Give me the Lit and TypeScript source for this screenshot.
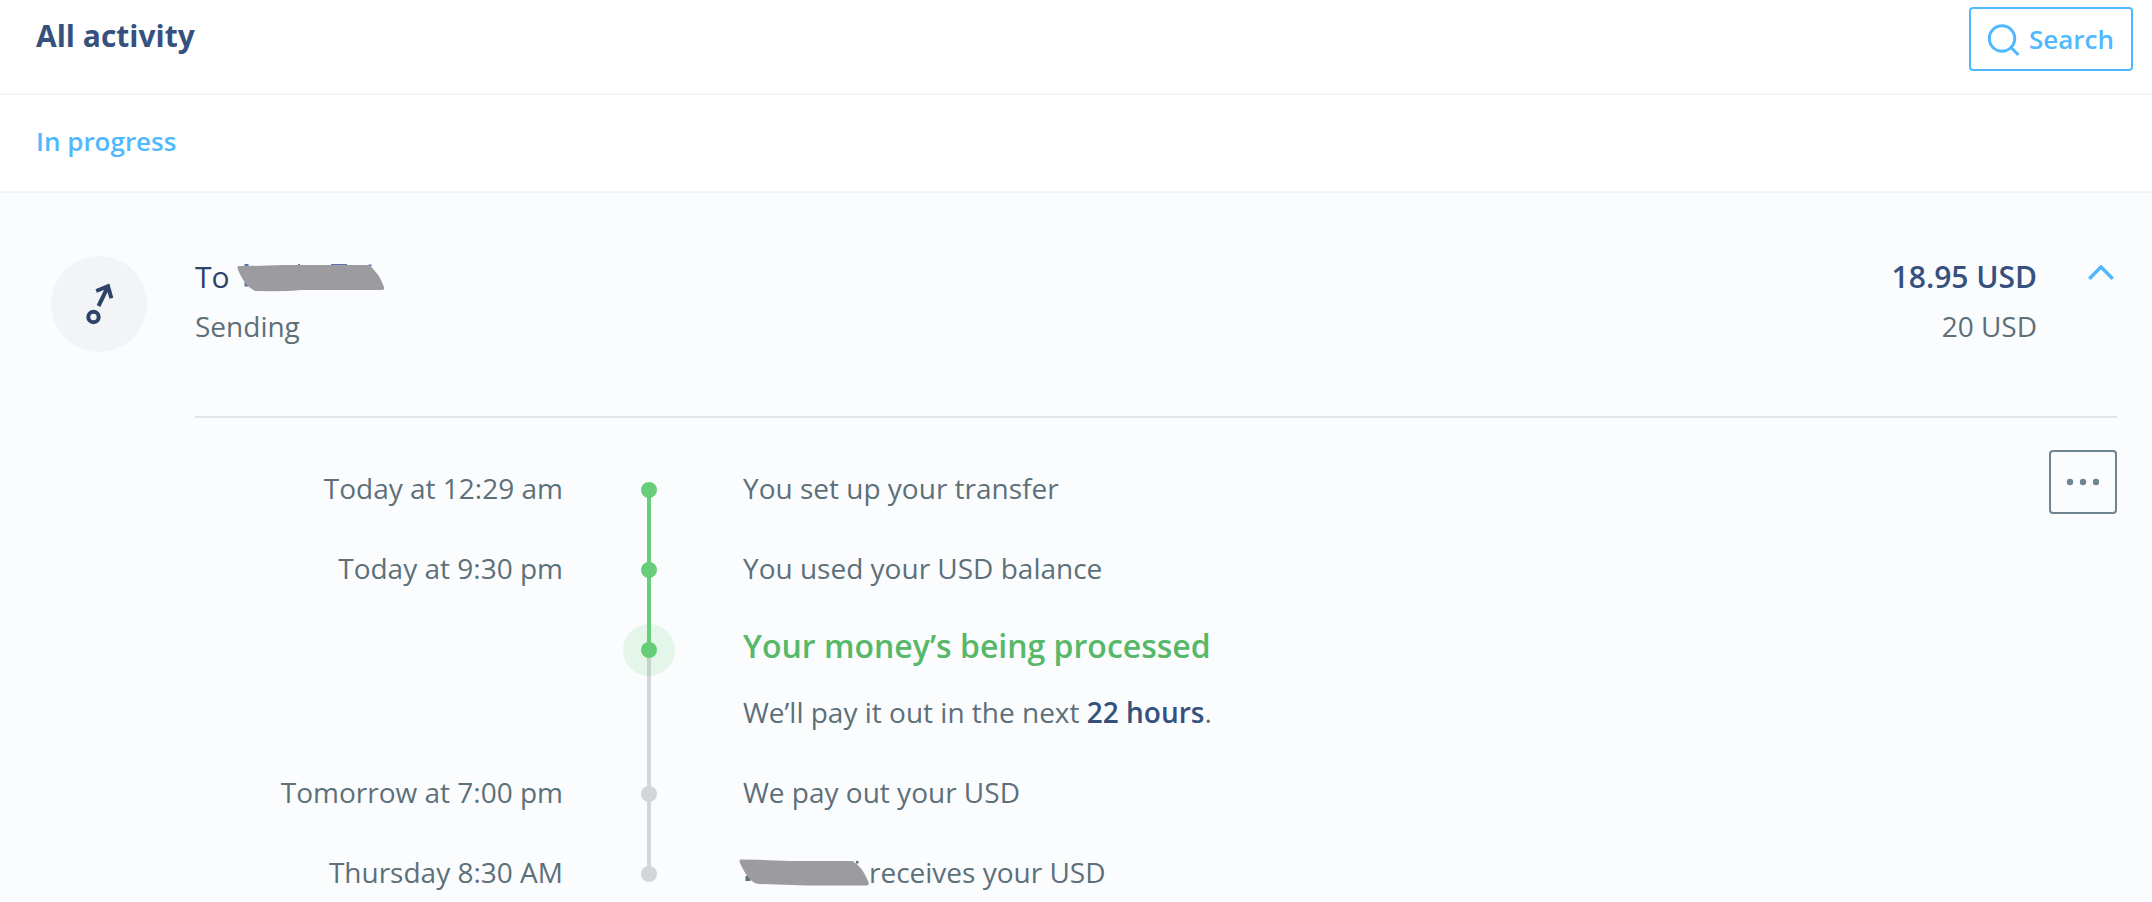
import { LitElement, html, css, svg, nothing, type TemplateResult } from "lit";
import { customElement, property, state } from "lit/decorators.js";
import { classMap } from "lit/directives/class-map.js";

interface Step {
  time: string;
  label: string | TemplateResult;
  status: "done" | "current" | "pending";
  note?: TemplateResult;
}

@customElement("transfer-timeline")
class TransferTimeline extends LitElement {
  @property({ attribute: false }) steps: Step[] = [];

  static styles = css`
    :host {
      display: block;
    }
    .steps {
      list-style: none;
      margin: 0;
      padding: 0;
    }
    .step {
      display: grid;
      grid-template-columns: minmax(0, 368px) 172px minmax(0, 1fr);
      line-height: 36px;
    }
    .time {
      text-align: right;
    }
    .body {
      padding: 0 0 44px 8px;
    }
    .step:last-child .body {
      padding-bottom: 0;
    }
    .label {
      margin: 0;
    }
    .current .label {
      font-size: 32px;
      line-height: 32px;
      font-weight: 600;
      color: #56b868;
    }
    .note {
      margin: 32px 0 0;
    }
    .note strong {
      font-weight: 600;
      color: #37517e;
    }
    .rail {
      position: relative;
      display: flex;
      justify-content: center;
      padding-top: 12px;
    }
    .rail::before {
      content: "";
      position: absolute;
      top: 20px;
      bottom: -20px;
      left: calc(50% - 2px);
      width: 4px;
      background: #d3d5d8;
    }
    .done .rail::before {
      background: #66cd78;
      z-index: 2;
    }
    .step:last-child .rail::before {
      display: none;
    }
    .dot {
      position: relative;
      z-index: 2;
      width: 16px;
      height: 16px;
      border-radius: 50%;
      background: #d3d5d8;
    }
    .done .dot,
    .current .dot {
      background: #66cd78;
    }
    .current .dot {
      z-index: 1;
    }
    .current .dot::after {
      content: "";
      position: absolute;
      inset: -18px;
      border-radius: 50%;
      background: rgba(102, 205, 120, 0.15);
    }
    .redacted {
      display: inline-block;
      width: 130px;
      height: 28px;
      margin-left: -4px;
      vertical-align: -4px;
    }
  `;

  render() {
    return html`<ol class="steps">
      ${this.steps.map(
        (s) => html`<li class=${classMap({ step: true, [s.status]: true })}>
          <span class="time">${s.time}</span>
          <span class="rail"><span class="dot"></span></span>
          <div class="body">
            <p class="label">${s.label}</p>
            ${s.note ? html`<p class="note">${s.note}</p>` : nothing}
          </div>
        </li>`
      )}
    </ol>`;
  }
}

const sendIcon = html`<svg width="96" height="96" viewBox="0 0 96 96" fill="none" stroke="#2e4369" aria-hidden="true">
  <circle cx="42.5" cy="61" r="5.2" stroke-width="4"></circle>
  <path d="M47.5 50 L57 30.5 M45.2 35 L57 30.2 L60.4 42.3" stroke-width="4"></path>
</svg>`;

const searchIcon = html`<svg width="34" height="34" viewBox="0 -2 34 34" fill="none" stroke="currentColor" stroke-width="3" aria-hidden="true">
  <circle cx="15" cy="14.5" r="12.7"></circle>
  <path d="M24 23.5 L31.4 30.9"></path>
</svg>`;

const nameScribble = svg`
  <path d="M7.5 0 h4 v3 h-4 z M7.5 18 h4 v4.5 h-4 z M94 0 h16 v2 h-16 z M61 0 h2 v2 h-2 z M131.5 0.5 h3 v2 h-3 z" fill="#5575ab"></path>
  <path d="M1 2 Q24 2 46 1 L132 1 Q142 9 147 23 Q148 26 145 26 L63 26 Q54 27.5 18 27 C9 22 4 14 0.5 4 Z" fill="#9c9b9f"></path>`;

const recipientScribble = svg`
  <path d="M6.5 17 h5 v5 h-5 z M117 2 h2.5 v2.5 h-2.5 z" fill="#5d7079"></path>
  <path d="M1 0.5 Q10 0.3 53 2 L114 2 Q124 9 129.5 23 Q130.5 26.5 128 26.5 L68 26.5 L21 25 Q16 25 13 22 C7 17 4 10 0.5 3 Z" fill="#9c9b9f"></path>`;

@customElement("app-root")
class AppRoot extends LitElement {
  @state() private expanded = true;

  private steps: Step[] = [
    { time: "Today at 12:29 am", label: "You set up your transfer", status: "done" },
    { time: "Today at 9:30 pm", label: "You used your USD balance", status: "done" },
    {
      time: "",
      label: "Your money’s being processed",
      status: "current",
      note: html`We’ll pay it out in the next <strong>22 hours</strong>.`,
    },
    { time: "Tomorrow at 7:00 pm", label: "We pay out your USD", status: "pending" },
    {
      time: "Thursday 8:30 AM",
      label: html`<svg class="redacted" viewBox="0 0 130 28" role="img" aria-label="Hidden name">${recipientScribble}</svg>receives your USD`,
      status: "pending",
    },
  ];

  static styles = css`
    :host {
      display: flex;
      flex-direction: column;
      min-height: 100vh;
      background: #fff;
      color: #5d7079;
      font-family: "Open Sans", "Noto Sans", sans-serif;
      font-size: 28px;
      line-height: 36px;
    }
    h1,
    h2,
    h3,
    p {
      margin: 0;
    }
    button {
      font: inherit;
      background: none;
      border: 0;
      padding: 0;
      cursor: pointer;
    }
    .top {
      display: flex;
      justify-content: space-between;
      align-items: flex-start;
      padding: 7px 19px 22px 36px;
      border-bottom: 2px solid #f2f4f5;
    }
    .title {
      font-size: 30px;
      line-height: 58px;
      font-weight: 700;
      color: #37517e;
    }
    .search {
      display: flex;
      align-items: center;
      gap: 8px;
      height: 64px;
      padding: 0 17px 0 16px;
      border: 2px solid #4fb8ff;
      border-radius: 4px;
      color: #4fb8ff;
      font-size: 26px;
      font-weight: 600;
    }
    .group {
      padding: 0 36px 4px;
      border-bottom: 2px solid #f2f4f5;
      font-size: 26px;
      line-height: 92px;
      font-weight: 600;
      color: #4fb8ff;
    }
    .entry {
      flex: 1;
      display: flex;
      align-items: flex-start;
      gap: 48px;
      padding: 63px 35px 0 51px;
      background: #fbfcfe;
    }
    .avatar {
      display: flex;
      width: 96px;
      height: 96px;
      border-radius: 50%;
      background: #f3f4f6;
    }
    .content {
      flex: 1;
      min-width: 0;
    }
    .summary {
      display: flex;
      align-items: flex-start;
      gap: 48px;
      padding-bottom: 72px;
      border-bottom: 2px solid #e1e5e9;
    }
    .who {
      flex: 1;
    }
    .name,
    .amount {
      display: flex;
      align-items: center;
      font-size: 30px;
      line-height: 42px;
      margin-bottom: 10px;
    }
    .name {
      gap: 7px;
      font-weight: 400;
      color: #2e4369;
    }
    .amount {
      font-weight: 600;
      color: #37517e;
    }
    .sums {
      text-align: right;
    }
    .toggle {
      display: flex;
      width: 32px;
      height: 32px;
      color: #4fb8ff;
    }
    .details {
      display: flex;
      align-items: flex-start;
      padding-top: 32px;
    }
    .timeline {
      flex: 1;
      padding-top: 20px;
    }
    .more {
      display: flex;
      align-items: center;
      justify-content: center;
      width: 68px;
      height: 64px;
      border: 2px solid #6f8691;
      border-radius: 4px;
      color: #6f8691;
    }
  `;

  render() {
    return html`
      <header class="top">
        <h1 class="title">All activity</h1>
        <button class="search" type="button">${searchIcon}<span>Search</span></button>
      </header>
      <h2 class="group">In progress</h2>
      <article class="entry">
        <span class="avatar">${sendIcon}</span>
        <div class="content">
          <div class="summary">
            <div class="who">
              <h3 class="name">
                To
                <svg width="148" height="32" viewBox="0 -3 148 32" role="img" aria-label="Hidden name">${nameScribble}</svg>
              </h3>
              <p>Sending</p>
            </div>
            <div class="sums">
              <p class="amount">18.95 USD</p>
              <p>20 USD</p>
            </div>
            <button
              class="toggle"
              type="button"
              aria-label="Toggle details"
              aria-expanded=${this.expanded}
              @click=${() => (this.expanded = !this.expanded)}
            >
              <svg width="32" height="32" viewBox="0 0 32 32" fill="none" stroke="currentColor" stroke-width="3.4" aria-hidden="true">
                <path d=${this.expanded ? "M4.3 22.8 L16 11 L27.7 22.8" : "M4.3 11 L16 22.8 L27.7 11"}></path>
              </svg>
            </button>
          </div>
          ${this.expanded
            ? html`<div class="details">
                <transfer-timeline class="timeline" .steps=${this.steps}></transfer-timeline>
                <button class="more" type="button" aria-label="More options">
                  <svg width="34" height="8" viewBox="0 0 34 8" fill="currentColor" aria-hidden="true">
                    <circle cx="4" cy="4" r="3.2"></circle>
                    <circle cx="17" cy="4" r="3.2"></circle>
                    <circle cx="30" cy="4" r="3.2"></circle>
                  </svg>
                </button>
              </div>`
            : nothing}
        </div>
      </article>
    `;
  }
}
